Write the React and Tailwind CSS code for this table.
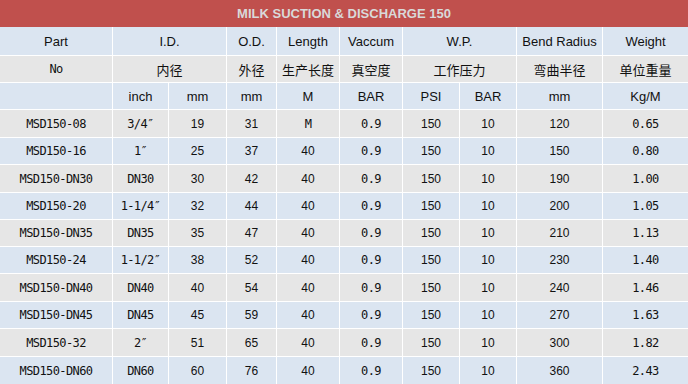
import React from "react";

const rows = [
  ["MSD150-08", "3/4″", "19", "31", "M", "0.9", "150", "10", "120", "0.65"],
  ["MSD150-16", "1″", "25", "37", "40", "0.9", "150", "10", "150", "0.80"],
  ["MSD150-DN30", "DN30", "30", "42", "40", "0.9", "150", "10", "190", "1.00"],
  ["MSD150-20", "1-1/4″", "32", "44", "40", "0.9", "150", "10", "200", "1.05"],
  ["MSD150-DN35", "DN35", "35", "47", "40", "0.9", "150", "10", "210", "1.13"],
  ["MSD150-24", "1-1/2″", "38", "52", "40", "0.9", "150", "10", "230", "1.40"],
  ["MSD150-DN40", "DN40", "40", "54", "40", "0.9", "150", "10", "240", "1.46"],
  ["MSD150-DN45", "DN45", "45", "59", "40", "0.9", "150", "10", "270", "1.63"],
  ["MSD150-32", "2″", "51", "65", "40", "0.9", "150", "10", "300", "1.82"],
  ["MSD150-DN60", "DN60", "60", "76", "40", "0.9", "150", "10", "360", "2.43"],
];

// columns drawn in the gothic mono face
const monoCols = [0, 1, 5, 9];

const sans = "font-['Liberation_Sans',Arial,sans-serif]";
const mono = "font-['DejaVu_Sans_Mono',monospace] text-[12px] tracking-[-0.6px]";
const cjk = "font-['Noto_Sans_CJK_SC',sans-serif] text-[13px]";

function Cell({ children, className = "", bg }) {
  return (
    <div
      className={`flex items-center justify-center text-[#111] leading-none ${bg} ${className}`}
    >
      {children}
    </div>
  );
}

export default function App() {
  const blue = "bg-[#dbe5f1]";
  const grey = "bg-[#e6e6e6]";

  return (
    <div className="w-[688px] h-[384px] bg-white overflow-hidden">
      <div
        className={`h-[27px] bg-[#c0504d] flex items-center justify-center text-[13px] font-bold text-[#d9d9d9] ${sans}`}
      >
        MILK SUCTION &amp; DISCHARGE 150
      </div>
      <div className="grid grid-cols-[112px_55px_57px_49px_62px_62px_56px_56px_85px_85px] grid-rows-[28px_26px_26px_27px_26px_27px_26px_26px_26px_27px_26px_27px_27px] gap-px bg-white">
        {/* header row 1 */}
        <Cell bg={blue} className={`${sans} text-[13px]`}>Part</Cell>
        <Cell bg={blue} className={`${sans} text-[13px] col-span-2`}>I.D.</Cell>
        <Cell bg={blue} className={`${sans} text-[13px]`}>O.D.</Cell>
        <Cell bg={blue} className={`${sans} text-[13px]`}>Length</Cell>
        <Cell bg={blue} className={`${sans} text-[13px]`}>Vaccum</Cell>
        <Cell bg={blue} className={`${sans} text-[13px] col-span-2`}>W.P.</Cell>
        <Cell bg={blue} className={`${sans} text-[13px]`}>Bend Radius</Cell>
        <Cell bg={blue} className={`${sans} text-[13px]`}>Weight</Cell>

        {/* header row 2 */}
        <Cell bg={grey} className={mono}>No</Cell>
        <Cell bg={grey} className={`${cjk} col-span-2`}>内径</Cell>
        <Cell bg={grey} className={cjk}>外径</Cell>
        <Cell bg={grey} className={cjk}>生产长度</Cell>
        <Cell bg={grey} className={cjk}>真空度</Cell>
        <Cell bg={grey} className={`${cjk} col-span-2`}>工作压力</Cell>
        <Cell bg={grey} className={cjk}>弯曲半径</Cell>
        <Cell bg={grey} className={cjk}>单位重量</Cell>

        {/* units */}
        {["", "inch", "mm", "mm", "M", "BAR", "PSI", "BAR", "mm", "Kg/M"].map((u, i) => (
          <Cell key={i} bg={blue} className={`${sans} text-[13px]`}>
            {u}
          </Cell>
        ))}

        {rows.map((r, ri) =>
          r.map((v, ci) => {
            const isMono = monoCols.includes(ci) || v === "M";
            return (
              <Cell
                key={`${ri}-${ci}`}
                bg={ri % 2 === 0 ? grey : blue}
                className={isMono ? mono : `${sans} text-[12px]`}
              >
                {v}
              </Cell>
            );
          })
        )}
      </div>
    </div>
  );
}
